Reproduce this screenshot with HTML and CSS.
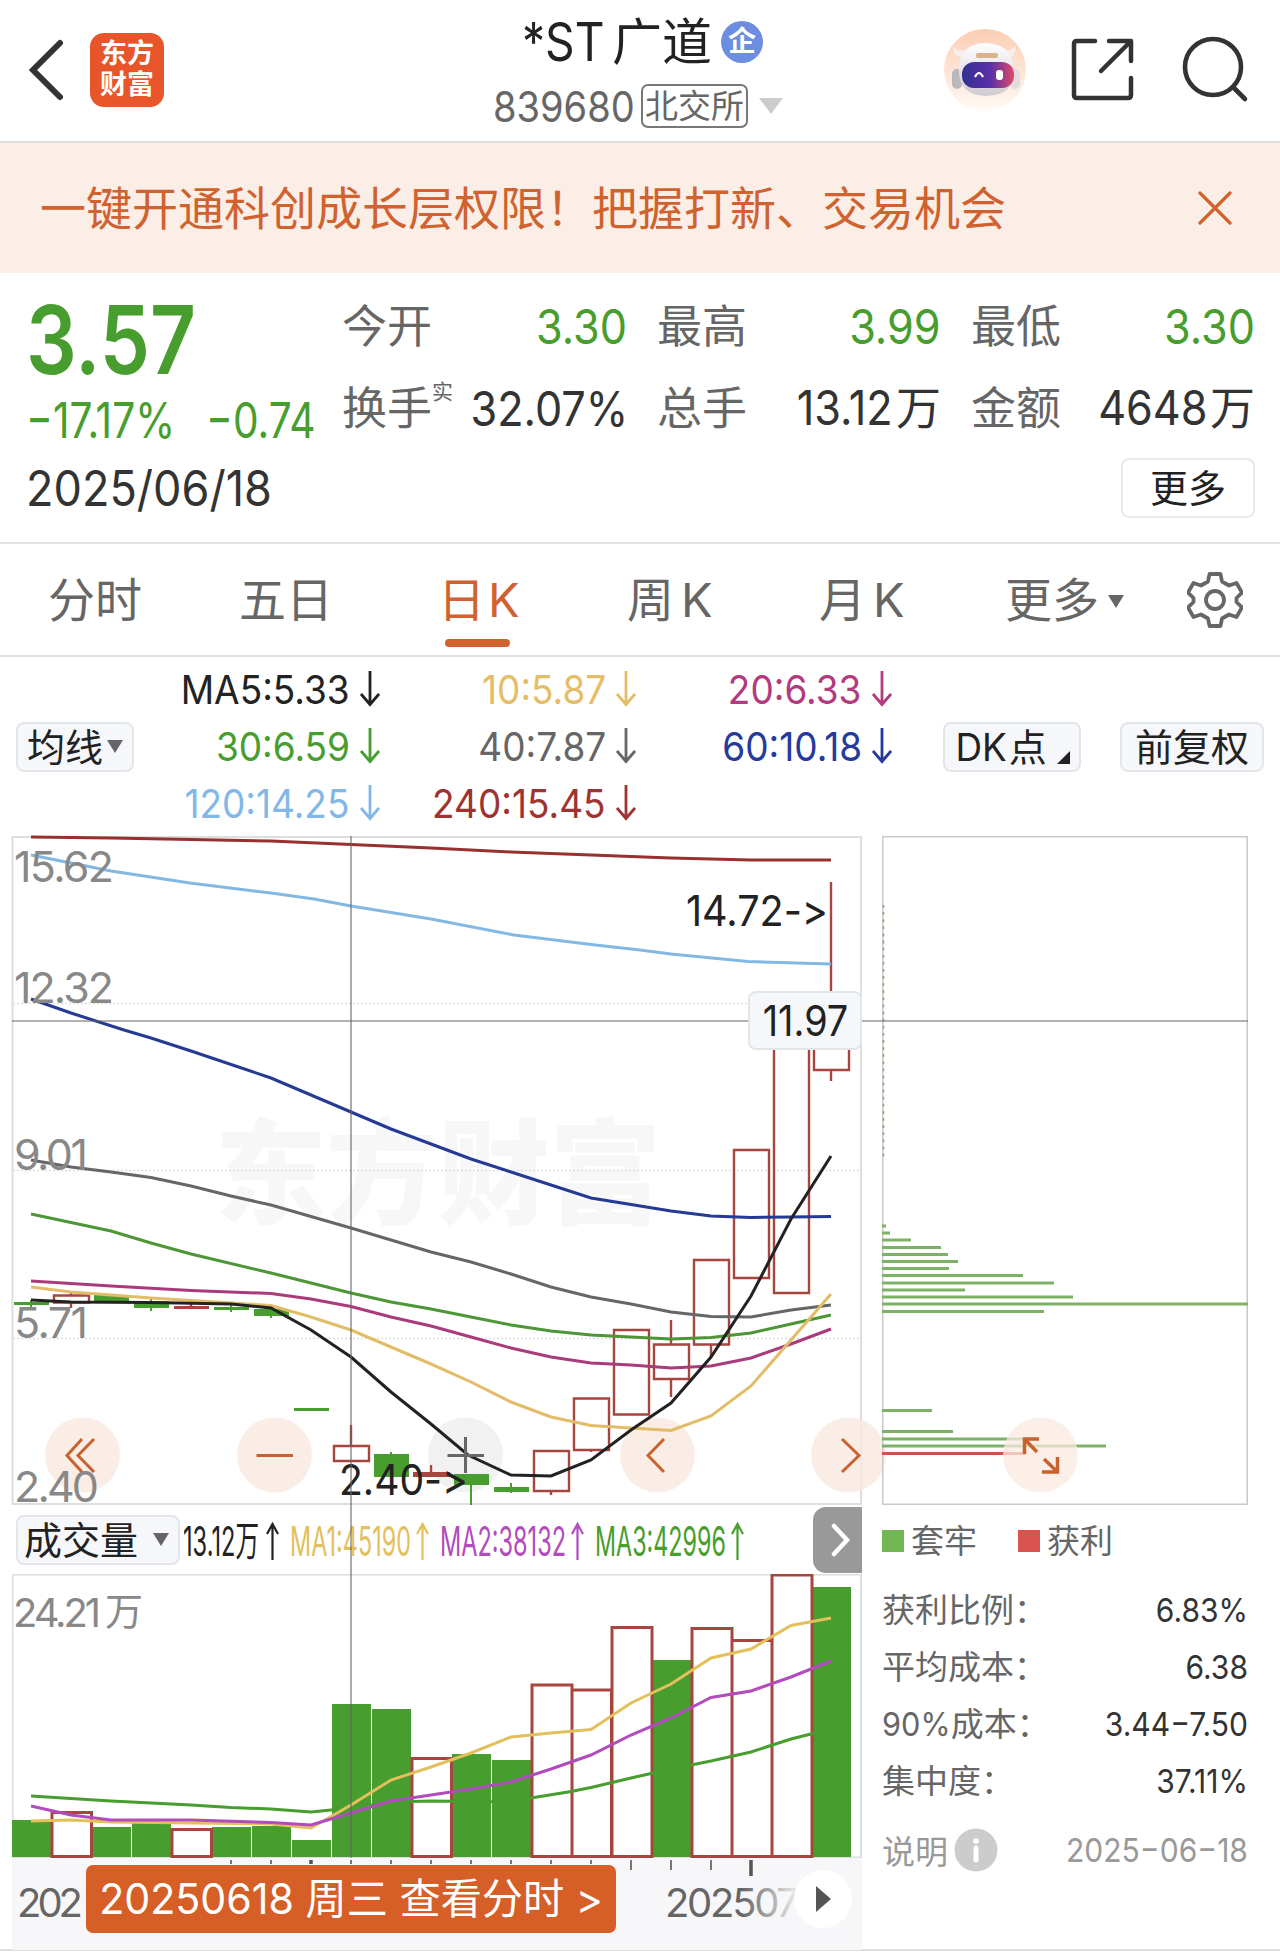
FILE: index.html
```html
<!DOCTYPE html>
<html lang="zh-CN">
<head>
    <meta charset="UTF-8">
    <meta name="viewport" content="width=device-width, initial-scale=1.0">
    <title>*ST广道 839680</title>
    <link rel="stylesheet" href="styles.css">
</head>
<body>
    <svg class="defs" width="0" height="0">
        <symbol id="down" viewBox="0 0 20 36"><path d="M10 0V33M1 23L10 33.500L19 23" fill="none" stroke="currentColor" stroke-width="2.800"/></symbol>
        <symbol id="up" viewBox="0 0 13 38"><path d="M6.500 38V2M1 12L6.500 2L12 12" fill="none" stroke="currentColor" stroke-width="2.200"/></symbol>
    </svg>

    <header class="header">
        <svg class="back" viewBox="0 0 36 62"><path d="M32 4L5 31L32 58" fill="none" stroke="#333" stroke-width="6" stroke-linecap="round"/></svg>
        <div class="logo">东方<br>财富</div>
        <div class="title">
            <div class="name"><span class="st">*ST</span><span>广道</span><i class="qi">企</i></div>
            <div class="code"><span class="code-num">839680</span><span class="market">北交所</span><i class="tri tri-light"></i></div>
        </div>
        <svg class="robot" viewBox="0 0 82 82">
            <defs>
                <linearGradient id="sky" x1="0" y1="0" x2="0" y2="1"><stop offset="0" stop-color="#fbceb3"/><stop offset="1" stop-color="#fffaf6"/></linearGradient>
                <linearGradient id="visor" x1="0" y1="0" x2="1" y2="0"><stop offset="0" stop-color="#353193"/><stop offset=".55" stop-color="#5b2fa8"/><stop offset="1" stop-color="#df4b68"/></linearGradient>
                <linearGradient id="helmet" x1="0" y1="0" x2="0" y2="1"><stop offset="0" stop-color="#fff"/><stop offset="1" stop-color="#cfcad0"/></linearGradient>
            </defs>
            <circle cx="41" cy="41" r="41" fill="url(#sky)"/>
            <path d="M19 28Q9 29 9 17Q13 23 24 21ZM62 28Q73 29 71 17Q68 23 57 21Z" fill="#f6eeeb"/>
            <rect x="8" y="40" width="10" height="20" rx="5" fill="#bcb6bd"/>
            <rect x="66" y="40" width="10" height="20" rx="5" fill="#e2dcdf"/>
            <path d="M15 40Q15 15 41 14Q69 15 70 40Q72 66 42 67Q14 66 15 40Z" fill="url(#helmet)"/>
            <rect x="32" y="24" width="22" height="5" rx="2" fill="#dcb28b"/>
            <rect x="18" y="33" width="52" height="26" rx="12" fill="url(#visor)"/>
            <path d="M31 48Q35 40 39 48" fill="none" stroke="#fff" stroke-width="2.200"/>
            <rect x="52" y="41" width="7" height="10" rx="3" fill="#fff"/>
        </svg>
        <svg class="share" viewBox="0 0 64 64"><path d="M24 3H6Q3 3 3 6V57Q3 60 6 60H57Q60 60 60 57V40M38 3H60V23M59 4L30 33" fill="none" stroke="#333" stroke-width="4.500" stroke-linecap="round" stroke-linejoin="round"/></svg>
        <svg class="search" viewBox="0 0 68 68"><circle cx="31" cy="31" r="28" fill="none" stroke="#333" stroke-width="4.600"/><path d="M51 51L63 63" stroke="#333" stroke-width="4.600" stroke-linecap="round"/></svg>
    </header>

    <div class="banner">
        <span>一键开通科创成长层权限！把握打新、交易机会</span>
        <svg class="close" viewBox="0 0 34 34"><path d="M2 2L32 32M32 2L2 32" stroke="#d0622f" stroke-width="3.200" stroke-linecap="round"/></svg>
    </div>

    <section class="quote">
        <div class="quote-left">
            <div class="price"><span class="num">3.57</span></div>
            <div class="change"><span class="num pct">−17.17%</span><span class="num">−0.74</span></div>
            <div class="date"><span class="num">2025/06/18</span></div>
        </div>
        <div class="quote-right">
            <div class="stats">
                <div class="stat"><label>今开</label><b class="num green">3.30</b></div>
                <div class="stat"><label>最高</label><b class="num green">3.99</b></div>
                <div class="stat"><label>最低</label><b class="num green">3.30</b></div>
                <div class="stat"><label>换手<sup>实</sup></label><b class="num">32.07%</b></div>
                <div class="stat"><label>总手</label><span class="val"><b class="num">13.12</b>万</span></div>
                <div class="stat"><label>金额</label><span class="val"><b class="num">4648</b>万</span></div>
            </div>
            <button class="more">更多</button>
        </div>
    </section>

    <nav class="tabs">
        <a>分时</a>
        <a>五日</a>
        <a class="active">日<span>K</span></a>
        <a>周<span>K</span></a>
        <a>月<span>K</span></a>
        <a>更多<i class="tri tri-small"></i></a>
        <svg class="gear" viewBox="0 0 56 56"><path d="M22.500 2H33.500L35 9.500L42 13.500L49.500 11L55 20.500L49.500 26V30L55 35.500L49.500 45L42 42.500L35 46.500L33.500 54H22.500L21 46.500L14 42.500L6.500 45L1 35.500L6.500 30V26L1 20.500L6.500 11L14 13.500L21 9.500Z" fill="none" stroke="#666" stroke-width="3.800" stroke-linejoin="round"/><circle cx="28" cy="28" r="9" fill="none" stroke="#666" stroke-width="3.800"/></svg>
    </nav>

    <section class="ma">
        <button class="chip">均线<i class="tri tri-small"></i></button>
        <div class="ma-grid">
            <span class="black"><b class="num">MA5:5.33</b><svg><use href="#down"/></svg></span>
            <span class="yellow"><b class="num">10:5.87</b><svg><use href="#down"/></svg></span>
            <span class="pink"><b class="num">20:6.33</b><svg><use href="#down"/></svg></span>
            <span class="green"><b class="num">30:6.59</b><svg><use href="#down"/></svg></span>
            <span class="gray"><b class="num">40:7.87</b><svg><use href="#down"/></svg></span>
            <span class="blue"><b class="num">60:10.18</b><svg><use href="#down"/></svg></span>
            <span class="sky"><b class="num">120:14.25</b><svg><use href="#down"/></svg></span>
            <span class="red"><b class="num">240:15.45</b><svg><use href="#down"/></svg></span>
        </div>
        <button class="chip dk"><span class="dk-text">DK</span>点<i class="corner"></i></button>
        <button class="chip">前复权</button>
    </section>

    <main class="charts">
        <div class="left">
            <svg class="kline" viewBox="12 836 850 669">
                <text class="watermark" x="215" y="1215" textLength="446" lengthAdjust="spacingAndGlyphs">东方财富</text>
                <path d="M12.500 837H861V1504H12.500Z" fill="none" stroke="#dedede" stroke-width="2"/>
                <path class="dots" d="M13 1003.500H861M13 1170.500H861M13 1338.500H861"/>

                <!-- buttons behind the candles -->
                <g fill="#f9e9df" fill-opacity=".8">
                    <circle cx="82.500" cy="1455" r="37.500"/>
                    <circle cx="274.500" cy="1455" r="37.500"/>
                    <circle cx="657.500" cy="1455" r="37.500"/>
                    <circle cx="848.500" cy="1455" r="37.500"/>
                </g>
                <circle cx="465.500" cy="1455" r="37.500" fill="#f1f1f1"/>

                <!-- candles -->
                <g fill="#479d2d">
                    <path d="M14 1302h35v3h-35zM94 1295h35v7h-35zM134 1301h35v7h-35zM214 1307h35v3h-35zM254 1309h35v7h-35zM294 1408h35v3h-35zM374 1454h35v23h-35zM454 1474h35v11h-35zM494 1487h35v5h-35z"/>
                    <path d="M30 1300h2v8h-2zM150 1299h2v12h-2zM230 1305h2v7h-2zM270 1309h2v9h-2zM390 1452h2v4h-2zM470 1474h2v31h-2zM510 1483h2v10h-2z"/>
                </g>
                <g fill="none" stroke="#a7453f" stroke-width="2.400">
                    <path d="M54 1295.500h35v7h-35zM334 1446h35v15h-35zM534 1451h35v40h-35zM574 1398.500h35v51.500h-35zM614 1330h35v84.500h-35zM654 1344.500h35v34.500h-35zM694 1260h35v84.500h-35zM734 1150h35v128h-35zM774 1030h35v263h-35zM814 1010h35v60h-35z"/>
                    <path d="M71 1293v2M71 1302v6M191 1303v6M351 1425v21M431 1465v8M551 1491v4M591 1450v2M671 1320v24M671 1379v18M711 1345v11M831 882v128M831 1070v11"/>
                </g>
                <path d="M174 1306h35v3h-35zM413 1472h37v5h-37z" fill="#a7453f"/>

                <g class="lines">
                    <polyline stroke="#97302f" points="31,837 111,838 191,839.500 271,841 351,844.500 431,848 511,852 591,855 671,858 751,860 831,860"/>
                    <polyline stroke="#82b8e4" points="31,855 71,863 111,871 190,883 271,893 314,899 351,906 431,919 514,935 591,944.500 640,950 671,954 748,961.500 831,964"/>
                    <polyline stroke="#243a94" points="31,999 71,1013 124,1030 151,1038 191,1051 271,1078 351,1112 391,1129 431,1144 471,1159 511,1172 551,1185 591,1198 631,1204.500 671,1211 711,1216 751,1217.500 791,1217 831,1216.500"/>
                    <polyline stroke="#666" points="31,1160 71,1167 111,1172 151,1177.500 191,1186 231,1196 271,1205 351,1228 391,1240 431,1252 471,1262 511,1274 551,1287 591,1297 631,1304 671,1312 711,1316.500 751,1317 791,1310 831,1305"/>
                    <polyline stroke="#4c9636" points="31,1214 111,1231 151,1243 191,1254 271,1273 351,1293 391,1302 431,1309 471,1317 511,1325 551,1331 591,1335 631,1337 671,1339 711,1337.500 751,1333 791,1324 831,1315"/>
                    <polyline stroke="#a93b7b" points="31,1281 111,1286 191,1290.500 271,1293.500 311,1299 351,1306.500 391,1317 431,1326 471,1337 511,1348 551,1357 591,1363 631,1365 671,1368 711,1366 751,1358 791,1344 831,1329"/>
                    <polyline stroke="#e3bc68" points="31,1287 71,1292 151,1298 271,1305.500 311,1317 351,1330 391,1347 431,1364 471,1382 511,1402 551,1417 591,1425.500 631,1428 671,1430.500 711,1416 751,1386 791,1340 831,1294"/>
                    <polyline stroke="#222" points="31,1300 71,1302 151,1302.500 231,1304 271,1308 311,1330 351,1357 391,1392 431,1424 468,1455 511,1475 551,1476 591,1460 631,1430 671,1403 711,1357 751,1296 791,1219 831,1156"/>
                </g>

                <g fill="none" stroke="#c9622f" stroke-width="3">
                    <path d="M82 1439L67 1455.500L82 1472M94 1439L78 1455.500L94 1472"/>
                    <path d="M256.500 1455.500H293"/>
                    <path d="M664 1439L648 1455.500L664 1472M842 1439L859 1455.500L842 1472"/>
                    <path d="M447.500 1455.500H484M465.500 1437V1473" stroke="#666"/>
                </g>

                <g class="scale">
                    <text x="14" y="882" textLength="100">15.62</text>
                    <text x="14" y="1003" textLength="100">12.32</text>
                    <text x="14" y="1170" textLength="74">9.01</text>
                    <text x="14" y="1338" textLength="74">5.71</text>
                    <text x="14" y="1502" textLength="85">2.40</text>
                </g>
                <g class="mark">
                    <text x="686" y="926" textLength="142" lengthAdjust="spacingAndGlyphs">14.72-&gt;</text>
                    <text x="339" y="1495" textLength="129" lengthAdjust="spacingAndGlyphs">2.40-&gt;</text>
                </g>
            </svg>

            <div class="vol-head">
                <button class="chip">成交量<i class="tri"></i></button>
                <svg class="vol-text" viewBox="184 1505 570 69">
                    <g class="vol-ma">
                        <text x="183" y="1556" textLength="76" lengthAdjust="spacingAndGlyphs" fill="#222">13.12万</text>
                        <text x="290" y="1556" textLength="121" lengthAdjust="spacingAndGlyphs" fill="#e3c05c">MA1:45190</text>
                        <text x="440" y="1556" textLength="126" lengthAdjust="spacingAndGlyphs" fill="#b24bbd">MA2:38132</text>
                        <text x="595" y="1556" textLength="131" lengthAdjust="spacingAndGlyphs" fill="#479d2d">MA3:42996</text>
                    </g>
                    <use href="#up" x="266" y="1522" width="13" height="38" color="#222"/>
                    <use href="#up" x="416" y="1522" width="13" height="38" color="#e3c05c"/>
                    <use href="#up" x="571" y="1522" width="13" height="38" color="#b24bbd"/>
                    <use href="#up" x="731" y="1522" width="13" height="38" color="#479d2d"/>
                </svg>
                <button class="next"><svg viewBox="0 0 20 34"><path d="M3 3L16 17L3 31" fill="none" stroke="#fff" stroke-width="4.500" stroke-linecap="round"/></svg></button>
            </div>

            <svg class="volume" viewBox="12 1574 850 284">
                <path d="M12.500 1574.500H861V1857.500H12.500Z" fill="none" stroke="#dedede" stroke-width="2"/>
                <path fill="#479d2d" d="M12 1820h39v37h-39zM92 1827h39v30h-39zM132 1823h39v34h-39zM212 1827h39v30h-39zM252 1826h39v31h-39zM292 1840h39v17h-39zM332 1704h39v153h-39zM372 1709h39v148h-39zM452 1754h39v103h-39zM492 1760h39v97h-39zM652 1660h39v197h-39zM812 1587h39v270h-39z"/>
                <path fill="#fff" stroke="#a7453f" stroke-width="3" d="M52 1812.500h39.500v44h-39.500zM172 1829.500h39.500v27h-39.500zM412 1758.500h39.500v98h-39.500zM532 1685h40v171.500h-40zM572 1690h39.500v166.500h-39.500zM612 1627.500h40v229h-40zM692 1628.500h40v228h-40zM732 1640.500h40v216h-40zM772 1575h40v281.500h-40z"/>
                <g class="lines">
                    <polyline stroke="#479d2d" points="31,1796 111,1801 191,1805 231,1807.500 271,1809 311,1812 351,1808 391,1802 431,1801 471,1801.500 511,1802 531,1798 571,1791.500 591,1787.500 631,1778 671,1769 711,1761 751,1752 791,1739 831,1729"/>
                    <polyline stroke="#e3c05c" points="31,1821 71,1820 111,1822 271,1824 311,1828 351,1805 391,1780 431,1767 471,1753 511,1737 551,1733 591,1729.500 631,1703 671,1684 711,1658 751,1649 791,1625.500 831,1618"/>
                    <polyline stroke="#b24bbd" points="31,1806 71,1815 111,1820 191,1820 271,1822.500 311,1825 351,1813 391,1801 431,1795 471,1789 511,1782 551,1769 591,1755 631,1735 671,1718 711,1697.500 751,1691 791,1677 831,1661"/>
                </g>
                <g class="scale">
                    <text class="vol-max" x="13" y="1627" textLength="88">24.21</text>
                    <text class="vol-max wan" x="105" y="1625">万</text>
                </g>
            </svg>

            <div class="axis">
                <svg class="ticks" viewBox="12 1858 850 92">
                    <path d="M231 1860v4M271 1860v4M351 1860v4M391 1860v4M431 1860v4M471 1860v4M511 1860v4M551 1860v4M591 1860v4M631 1860v10M671 1860v10M711 1860v10" stroke="#777" stroke-width="2"/>
                    <path d="M311 1860v4M751 1860v16" stroke="#555" stroke-width="3.500"/>
                    <g class="months">
                        <text x="17" y="1917" textLength="66">202</text>
                        <text x="665" y="1917" textLength="134">202507</text>
                    </g>
                </svg>
                <div class="fade"></div>
                <a class="day"><span>20250618 周三 查看分时 &gt;</span></a>
                <button class="play"><svg viewBox="0 0 16 26"><path d="M0 0L15 13L0 26Z" fill="#555"/></svg></button>
            </div>
        </div>

        <aside class="right">
            <svg class="chips" viewBox="882 836 366 669">
                <path d="M882.500 836.500H1247.500V1504.500H882.500Z" fill="none" stroke="#c9c9c9" stroke-width="2"/>
                <path d="M883.500 905V1160" stroke="#7db266" stroke-width="1.500" stroke-dasharray="3 4.100"/>
                <path d="M882 1226H886M882 1233H890M882 1240H911M882 1247.500H941M882 1254.500H948M882 1261.500H958M882 1268.500H949M882 1275.500H1023M882 1283H1054M882 1290H965M882 1297H1073M882 1304H1248M882 1311.500H1044M882 1410.500H932M882 1431.500H953M882 1439H1026M882 1446H1106" stroke="#7db266" stroke-width="3"/>
                <path d="M882 1453.500H1026" stroke="#c6574f" stroke-width="3"/>
                <circle cx="1040.500" cy="1455" r="37.500" fill="#f9e9df" fill-opacity=".75"/>
                <path d="M1039 1439H1024.500V1454M1024.500 1439L1037 1452M1042 1472H1057.500V1457M1057.500 1472L1044 1459" fill="none" stroke="#c9622f" stroke-width="3.500"/>
            </svg>
            <div class="legend"><i class="box box-green"></i><span>套牢</span><i class="box box-red"></i><span>获利</span></div>
            <dl class="cost">
                <dt>获利比例：</dt><dd>6.83%</dd>
                <dt>平均成本：</dt><dd>6.38</dd>
                <dt><span class="lat">90%</span>成本：</dt><dd>3.44−7.50</dd>
                <dt>集中度：</dt><dd>37.11%</dd>
            </dl>
            <div class="note"><span>说明</span><svg viewBox="0 0 44 44"><circle cx="22" cy="22" r="21.500" fill="#ccc"/><circle cx="22" cy="13" r="2.800" fill="#fff"/><path d="M22 20V32" stroke="#fff" stroke-width="5" stroke-linecap="round"/></svg><time>2025−06−18</time></div>
        </aside>

        <div class="cross-x"></div>
        <div class="cross-y"></div>
        <div class="price-tag"><span>11.97</span></div>
    </main>
</body>
</html>
```
FILE: styles.css
```css
* {
    box-sizing: border-box;
}
body, html {
    margin: 0;
    padding: 0;
    background-color: #fff;
}
body {
    width: 1280px;
    height: 1959px;
    overflow: hidden;
    font-family: Inter, "Noto Sans CJK SC", sans-serif;
    color: #333;
}
svg {
    display: block;
    flex: none;
}
.defs {
    position: absolute;
}
i, b {
    font-style: normal;
    font-weight: 400;
}
button {
    font-family: inherit;
    margin: 0;
    padding: 0;
    color: #222;
}
/* digits are drawn a little condensed */
.num {
    display: inline-block;
    transform: scaleX(0.9);
    transform-origin: left;
    white-space: nowrap;
}
.green { color: #479d2d; }
.black { color: #222; }
.yellow { color: #e5bd68; }
.pink { color: #b23a80; }
.gray { color: #666; }
.blue { color: #26399c; }
.sky { color: #82b8e8; }
.red { color: #9e3331; }

.tri {
    display: inline-block;
    border-left: 8px solid transparent;
    border-right: 8px solid transparent;
    border-top: 13px solid #666;
}
.tri-light {
    border-left-width: 12px;
    border-right-width: 12px;
    border-top: 16px solid #ccc;
}

/* header */
.header {
    display: flex;
    height: 143px;
    border-bottom: 2px solid #ddd;
}
.back {
    width: 36px;
    height: 62px;
    margin: 39px 0 0 28px;
}
.logo {
    width: 74px;
    height: 74px;
    margin: 33px 0 0 26px;
    padding-top: 5px;
    border-radius: 14px;
    background-color: #e9552a;
    color: #fff;
    font-size: 27px;
    font-weight: 700;
    line-height: 31px;
    text-align: center;
}
.title {
    width: 300px;
    margin-left: 329px;
}
.name {
    display: flex;
    align-items: center;
    height: 72px;
    margin-top: 6px;
    padding-left: 29px;
    font-size: 50px;
    line-height: 72px;
    color: #222;
    white-space: nowrap;
}
.st {
    width: 90px;
    font-size: 53px;
    transform: scaleX(0.87);
    transform-origin: left;
}
.qi {
    width: 42px;
    height: 42px;
    margin-left: 9px;
    border-radius: 50%;
    background-color: #6d8ee0;
    color: #fff;
    font-size: 28px;
    font-weight: 700;
    line-height: 41px;
    text-align: center;
}
.code {
    display: flex;
    align-items: center;
    height: 46px;
    margin-top: 5px;
    color: #666;
}
.code-num {
    width: 148px;
    font-size: 42px;
    transform: scaleX(0.905);
    transform-origin: left;
}
.market {
    width: 107px;
    height: 44px;
    border: 2px solid #777;
    border-radius: 7px;
    font-size: 33px;
    line-height: 40px;
    text-align: center;
}
.code .tri {
    margin-left: 11px;
}
.robot {
    width: 82px;
    height: 82px;
    margin: 29px 0 0 151px;
}
.share {
    width: 64px;
    height: 64px;
    margin: 38px 0 0 45px;
}
.search {
    width: 68px;
    height: 68px;
    margin: 36px 0 0 47px;
}

/* notice */
.banner {
    display: flex;
    align-items: center;
    justify-content: space-between;
    height: 130px;
    padding: 0 48px 0 40px;
    background-color: #fbeee6;
    color: #d0622f;
    font-size: 46px;
}
.banner span {
    padding-bottom: 6px;
}
.close {
    width: 34px;
    height: 34px;
}

/* quote */
.quote {
    display: flex;
    height: 271px;
    border-bottom: 2px solid #e0e2e3;
}
.quote-left {
    width: 342px;
    padding-left: 26px;
}
.price {
    height: 113px;
    padding-top: 9px;
    font-size: 95px;
    font-weight: 600;
    line-height: 115px;
    color: #479d2d;
}
.price .num {
    transform: scaleX(0.84);
}
.change {
    display: flex;
    height: 70px;
    font-size: 49px;
    line-height: 70px;
    color: #479d2d;
}
.pct {
    width: 180px;
}
.change .num {
    transform: scaleX(0.83);
}
.date {
    height: 66px;
    font-size: 49px;
    line-height: 66px;
}
.date .num {
    transform: scaleX(0.92);
}
.quote-right {
    display: flex;
    flex-direction: column;
    align-items: flex-end;
    width: 938px;
    padding: 12px 25px 0 0;
}
.stats {
    display: grid;
    grid-template-columns: 285px 284px 284px;
    grid-template-rows: 84px 80px;
    column-gap: 30px;
    width: 913px;
}
.stat {
    display: flex;
    align-items: center;
    justify-content: space-between;
    font-size: 45px;
    line-height: 80px;
    white-space: nowrap;
}
.stat label {
    color: #666;
}
.stat sup {
    font-size: 21px;
    line-height: 20px;
    vertical-align: 26px;
}
.stat .num {
    font-size: 48px;
    line-height: 1;
    transform: scaleX(0.9);
    transform-origin: right;
}
.stat .val .num {
    margin-right: 3px;
}
.more {
    width: 134px;
    height: 60px;
    margin-top: 9px;
    border: 2px solid #e7eaeb;
    border-radius: 8px;
    background-color: #fff;
    font-size: 38px;
    line-height: 54px;
}

/* period tabs */
.tabs {
    display: grid;
    grid-template-columns: 191px 199px 189px 192px 186px 182px 60px;
    height: 113px;
    padding-left: 48px;
    border-bottom: 2px solid #e0e2e3;
    font-size: 47px;
    line-height: 111px;
    color: #666;
}
.tabs a span {
    margin-left: 7px;
}
.tabs .active {
    position: relative;
    color: #d0622f;
}
.tabs .active span {
    margin-left: 3px;
}
.active::after {
    content: "";
    position: absolute;
    left: 7px;
    bottom: 8px;
    width: 65px;
    height: 8px;
    border-radius: 4px;
    background-color: #d0622f;
}
.tabs .tri {
    margin-left: 9px;
    vertical-align: 9px;
}
.gear {
    width: 56px;
    height: 56px;
    margin-top: 28px;
}

/* moving averages */
.ma {
    display: flex;
    align-items: center;
    height: 179px;
    padding: 0 16px 0;
}
.chip {
    display: flex;
    align-items: center;
    justify-content: center;
    height: 50px;
    border: 2px solid #e3e6e9;
    border-radius: 8px;
    background-color: #f6f7fa;
    font-size: 38px;
    line-height: 44px;
    white-space: nowrap;
}
.ma .chip {
    width: 144px;
}
.ma .chip:first-child {
    width: 118px;
}
.chip .tri {
    margin-left: 4px;
}
.ma-grid {
    display: grid;
    grid-template-columns: 246px 256px 256px;
    grid-auto-rows: 57px;
    width: 810px;
    margin-bottom: 1px;
}
.ma-grid > span {
    display: flex;
    align-items: center;
    justify-content: flex-end;
    font-size: 40px;
}
.ma-grid .num {
    transform: scaleX(0.925);
    transform-origin: right;
}
.ma-grid svg {
    width: 20px;
    height: 36px;
    margin-left: 10px;
}
.ma .dk {
    width: 138px;
    margin-right: 39px;
}
.dk-text {
    width: 54px;
    transform: scaleX(0.97);
    transform-origin: left;
}
.corner {
    align-self: flex-end;
    margin: 0 0 6px 10px;
    border-left: 13px solid transparent;
    border-bottom: 13px solid #222;
}

/* charts */
.charts {
    position: relative;
    display: grid;
    grid-template-columns: 850px 366px;
    column-gap: 20px;
    height: 1115px;
    padding-left: 12px;
    border-bottom: 2px solid #ddd;
}
.kline {
    width: 850px;
    height: 669px;
    overflow: visible;
}
.watermark {
    font-size: 114px;
    font-weight: 900;
    fill: #f7f7f8;
}
.dots {
    fill: none;
    stroke: #ddd;
    stroke-width: 1.5;
    stroke-dasharray: 2 2;
}
.lines polyline {
    fill: none;
    stroke-width: 3;
}
.scale text {
    font-size: 43px;
    fill: #888;
}
.scale .vol-max {
    font-size: 40px;
}
.scale .wan {
    font-size: 38px;
}
.mark text {
    font-size: 43px;
    font-feature-settings: "calt" 0;
    font-variant-ligatures: none;
    fill: #222;
}
.vol-head {
    display: flex;
    align-items: center;
    height: 69px;
    padding-left: 4px;
}
.vol-head .chip {
    width: 164px;
}
.vol-head .tri {
    margin-left: 15px;
    margin-right: 3px;
}
.vol-text {
    width: 570px;
    height: 69px;
    margin-left: 4px;
}
.vol-ma text {
    font-size: 41px;
}
.next {
    width: 49px;
    height: 66px;
    margin-left: auto;
    padding-left: 18px;
    border: 0;
    border-radius: 13px 0 0 13px;
    background-color: #999;
}
.next svg {
    width: 20px;
    height: 34px;
}
.volume {
    width: 850px;
    height: 284px;
}
.axis {
    position: relative;
    height: 92px;
    background-color: #f7f7f9;
}
.ticks {
    width: 850px;
    height: 92px;
}
.months text {
    font-size: 40px;
    fill: #666;
}
.fade {
    position: absolute;
    left: 730px;
    top: 20px;
    width: 60px;
    height: 50px;
    background: linear-gradient(to right, rgba(247, 247, 249, 0), #f7f7f9);
}
.day {
    position: absolute;
    left: 74px;
    top: 7px;
    width: 530px;
    height: 68px;
    border-radius: 7px;
    background-color: #d65f28;
    color: #fff;
    font-size: 42px;
    line-height: 68px;
    text-align: center;
    white-space: nowrap;
}
.day span {
    display: inline-block;
    transform: scaleX(0.98);
}
.play {
    position: absolute;
    left: 782px;
    top: 12px;
    width: 58px;
    height: 58px;
    padding-left: 22px;
    border: 0;
    border-radius: 50%;
    background-color: #fff;
}
.play svg {
    width: 16px;
    height: 26px;
}

/* cost distribution */
.chips {
    width: 366px;
    height: 669px;
}
.legend {
    display: flex;
    align-items: center;
    height: 72px;
    color: #666;
    font-size: 33px;
}
.legend span {
    margin: -4px 41px 0 7px;
}
.box {
    width: 22px;
    height: 22px;
}
.box-green { background-color: #74b654; }
.box-red { background-color: #d9534f; }
.cost {
    display: grid;
    grid-template-columns: 200px 166px;
    grid-auto-rows: 57px;
    margin: 5px 0 0;
    font-size: 33px;
    line-height: 57px;
}
.cost dt {
    color: #666;
    white-space: nowrap;
}
.lat {
    display: inline-block;
    margin-right: -5px;
    transform: scaleX(0.93);
    transform-origin: left;
}
.cost dd {
    margin: 0;
    text-align: right;
    white-space: nowrap;
    transform: scaleX(0.91);
    transform-origin: right;
}
.note {
    display: flex;
    align-items: center;
    height: 80px;
    color: #999;
    font-size: 33px;
}
.note svg {
    width: 44px;
    height: 44px;
    margin-left: 6px;
}
.note time {
    margin-left: auto;
    transform: scaleX(0.91);
    transform-origin: right;
}

/* crosshair */
.cross-x {
    position: absolute;
    left: 12px;
    top: 184px;
    width: 1236px;
    height: 2px;
    background-color: rgba(100, 100, 100, 0.5);
}
.cross-y {
    position: absolute;
    left: 350px;
    top: 0;
    width: 2px;
    height: 1022px;
    background-color: rgba(100, 100, 100, 0.55);
}
.price-tag {
    position: absolute;
    left: 748px;
    top: 155px;
    width: 114px;
    height: 59px;
    border: 2px solid #e3e6e9;
    border-radius: 8px;
    background-color: #f6f7fa;
    color: #222;
    font-size: 42px;
    line-height: 56px;
    text-align: center;
}
.price-tag span {
    display: inline-block;
    margin: 0 -10px;
    transform: scaleX(0.9);
}
```
